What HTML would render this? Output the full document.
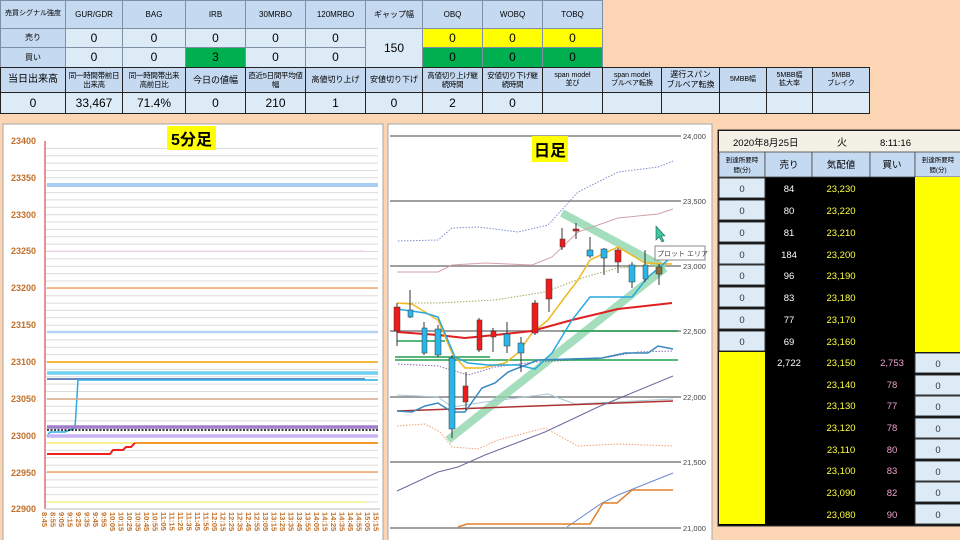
<!DOCTYPE html>
<html><head><meta charset="utf-8"><style>
*{margin:0;padding:0;box-sizing:border-box}
body{width:960px;height:540px;background:#fcd5b4;position:relative;overflow:hidden;font-family:"Liberation Sans","Noto Sans CJK JP",sans-serif}
.c{position:absolute;border:1px solid #7f8fa6;display:flex;align-items:center;justify-content:center;text-align:center;color:#000;line-height:1.2}
.h{background:#c5d9f1;font-size:8px}
.v{background:#ddebf7;font-size:12px}
.y{background:#ffff00;font-size:12px}
.g{background:#00b050;font-size:12px}
.k{border-color:#222}
.s{font-size:7.5px;letter-spacing:-0.3px}
</style></head><body>
<div class="c h" style="left:0;top:0;width:66px;height:29px;font-size:7px">売買シグナル強度</div>
<div class="c h" style="left:65px;top:0;width:58px;height:29px">GUR/GDR</div>
<div class="c h" style="left:122px;top:0;width:64px;height:29px">BAG</div>
<div class="c h" style="left:185px;top:0;width:61px;height:29px">IRB</div>
<div class="c h" style="left:245px;top:0;width:61px;height:29px">30MRBO</div>
<div class="c h" style="left:305px;top:0;width:61px;height:29px">120MRBO</div>
<div class="c h" style="left:365px;top:0;width:58px;height:29px">ギャップ幅</div>
<div class="c h" style="left:422px;top:0;width:61px;height:29px">OBQ</div>
<div class="c h" style="left:482px;top:0;width:61px;height:29px">WOBQ</div>
<div class="c h" style="left:542px;top:0;width:61px;height:29px">TOBQ</div>
<div class="c h" style="left:0;top:28px;width:66px;height:20px">売り</div>
<div class="c v" style="left:65px;top:28px;width:58px;height:20px">0</div>
<div class="c v" style="left:122px;top:28px;width:64px;height:20px">0</div>
<div class="c v" style="left:185px;top:28px;width:61px;height:20px">0</div>
<div class="c v" style="left:245px;top:28px;width:61px;height:20px">0</div>
<div class="c v" style="left:305px;top:28px;width:61px;height:20px">0</div>
<div class="c v" style="left:365px;top:28px;width:58px;height:40px">150</div>
<div class="c y" style="left:422px;top:28px;width:61px;height:20px">0</div>
<div class="c y" style="left:482px;top:28px;width:61px;height:20px">0</div>
<div class="c y" style="left:542px;top:28px;width:61px;height:20px">0</div>
<div class="c h" style="left:0;top:47px;width:66px;height:21px">買い</div>
<div class="c v" style="left:65px;top:47px;width:58px;height:21px">0</div>
<div class="c v" style="left:122px;top:47px;width:64px;height:21px">0</div>
<div class="c g" style="left:185px;top:47px;width:61px;height:21px">3</div>
<div class="c v" style="left:245px;top:47px;width:61px;height:21px">0</div>
<div class="c v" style="left:305px;top:47px;width:61px;height:21px">0</div>
<div class="c g" style="left:422px;top:47px;width:61px;height:21px">0</div>
<div class="c g" style="left:482px;top:47px;width:61px;height:21px">0</div>
<div class="c g" style="left:542px;top:47px;width:61px;height:21px">0</div>
<div class="c h k" style="left:0;top:67px;width:66px;height:26px;font-size:10px">当日出来高</div>
<div class="c h k s" style="left:65px;top:67px;width:58px;height:26px">同一時間帯前日<br>出来高</div>
<div class="c h k s" style="left:122px;top:67px;width:64px;height:26px">同一時間帯出来<br>高前日比</div>
<div class="c h k" style="left:185px;top:67px;width:61px;height:26px;font-size:9px">今日の値幅</div>
<div class="c h k s" style="left:245px;top:67px;width:61px;height:26px">直近5日間平均値<br>幅</div>
<div class="c h k" style="left:305px;top:67px;width:61px;height:26px">高値切り上げ</div>
<div class="c h k" style="left:365px;top:67px;width:58px;height:26px">安値切り下げ</div>
<div class="c h k s" style="left:422px;top:67px;width:61px;height:26px">高値切り上げ継<br>続時間</div>
<div class="c h k s" style="left:482px;top:67px;width:61px;height:26px">安値切り下げ継<br>続時間</div>
<div class="c h k" style="left:542px;top:67px;width:61px;height:26px;font-size:7px">span model<br>並び</div>
<div class="c h k" style="left:602px;top:67px;width:60px;height:26px;font-size:7px">span model<br>ブルベア転換</div>
<div class="c h k" style="left:661px;top:67px;width:59px;height:26px">遅行スパン<br>ブルベア転換</div>
<div class="c h k" style="left:719px;top:67px;width:48px;height:26px;font-size:7px">5MBB幅</div>
<div class="c h k" style="left:766px;top:67px;width:47px;height:26px;font-size:7px">5MBB幅<br>拡大率</div>
<div class="c h k" style="left:812px;top:67px;width:58px;height:26px;font-size:7px">5MBB<br>ブレイク</div>
<div class="c v k" style="left:0;top:92px;width:66px;height:22px">0</div>
<div class="c v k" style="left:65px;top:92px;width:58px;height:22px">33,467</div>
<div class="c v k" style="left:122px;top:92px;width:64px;height:22px">71.4%</div>
<div class="c v k" style="left:185px;top:92px;width:61px;height:22px">0</div>
<div class="c v k" style="left:245px;top:92px;width:61px;height:22px">210</div>
<div class="c v k" style="left:305px;top:92px;width:61px;height:22px">1</div>
<div class="c v k" style="left:365px;top:92px;width:58px;height:22px">0</div>
<div class="c v k" style="left:422px;top:92px;width:61px;height:22px">2</div>
<div class="c v k" style="left:482px;top:92px;width:61px;height:22px">0</div>
<div class="c v k" style="left:542px;top:92px;width:61px;height:22px"></div>
<div class="c v k" style="left:602px;top:92px;width:60px;height:22px"></div>
<div class="c v k" style="left:661px;top:92px;width:59px;height:22px"></div>
<div class="c v k" style="left:719px;top:92px;width:48px;height:22px"></div>
<div class="c v k" style="left:766px;top:92px;width:47px;height:22px"></div>
<div class="c v k" style="left:812px;top:92px;width:58px;height:22px"></div>

<svg style="position:absolute;left:0;top:0" width="960" height="540" xmlns="http://www.w3.org/2000/svg" font-family="Liberation Sans, Noto Sans CJK JP, sans-serif">
<rect x="3" y="124" width="380" height="418" fill="#fff" stroke="#a6a6a6"/>
<g stroke="#dcdcdc" stroke-width="1">
<path d="M45 148.4H378M45 155.7H378M45 163.1H378M45 170.5H378M45 177.8H378M45 185.2H378M45 192.6H378M45 199.9H378M45 207.3H378M45 214.7H378M45 222H378M45 229.4H378M45 236.8H378M45 244.1H378M45 251.5H378M45 258.9H378M45 266.2H378M45 273.6H378M45 281H378M45 288.3H378M45 295.7H378M45 303.1H378M45 310.4H378M45 317.8H378M45 325.2H378M45 332.5H378M45 339.9H378M45 347.3H378M45 354.6H378M45 362H378M45 369.4H378M45 376.7H378M45 384.1H378M45 391.5H378M45 398.8H378M45 406.2H378M45 413.6H378M45 420.9H378M45 428.3H378M45 435.7H378M45 443H378M45 450.4H378M45 457.8H378M45 465.1H378M45 472.5H378M45 479.9H378M45 487.2H378M45 494.6H378M45 502H378"/>
</g>
<line x1="45" y1="141" x2="45" y2="509" stroke="#e07070" stroke-width="1.5"/>
<line x1="45" y1="509" x2="380" y2="509" stroke="#bbb"/>
<g font-size="9" font-weight="bold" fill="#c0702a" text-anchor="end">
<text x="36" y="144">23400</text><text x="36" y="181">23350</text><text x="36" y="218">23300</text><text x="36" y="254">23250</text><text x="36" y="291">23200</text><text x="36" y="328">23150</text><text x="36" y="365">23100</text><text x="36" y="402">23050</text><text x="36" y="439">23000</text><text x="36" y="476">22950</text><text x="36" y="512">22900</text>
</g>
<line x1="47" y1="185" x2="378" y2="185" stroke="#a9cdf0" stroke-width="4"/>
<line x1="47" y1="251" x2="365" y2="251" stroke="#f6d4ee" stroke-width="1"/>
<line x1="47" y1="288" x2="378" y2="288" stroke="#f4a46a" stroke-width="1.5"/>
<line x1="47" y1="332" x2="378" y2="332" stroke="#b5d3f5" stroke-width="2.5"/>
<line x1="47" y1="362" x2="378" y2="362" stroke="#f4b83a" stroke-width="2"/>
<line x1="47" y1="373" x2="378" y2="373" stroke="#6fd0f0" stroke-width="3.5"/>
<line x1="47" y1="379" x2="365" y2="379" stroke="#6b8bbf" stroke-width="2"/>
<polyline points="47,436 50,432 65,432 75,428 78,380 378,380" fill="none" stroke="#29aee5" stroke-width="1.5"/>
<line x1="47" y1="399" x2="378" y2="399" stroke="#d9a98a" stroke-width="1.5"/>
<line x1="47" y1="427" x2="378" y2="427" stroke="#a07ec8" stroke-width="3.5"/>
<line x1="47" y1="430" x2="378" y2="430" stroke="#000" stroke-width="1.5" stroke-dasharray="2,1.5"/>
<line x1="47" y1="436" x2="378" y2="436" stroke="#c8b4f5" stroke-width="3.5"/>
<line x1="47" y1="443" x2="135" y2="443" stroke="#f7ea6a" stroke-width="1.5"/>
<line x1="135" y1="443" x2="378" y2="443" stroke="#f39a28" stroke-width="2"/>
<polyline points="47,454 110,454 113,450 123,450 126,447 131,447 135,443" fill="none" stroke="#ee2020" stroke-width="2"/>
<line x1="47" y1="472" x2="378" y2="472" stroke="#f4a46a" stroke-width="1.5"/>
<line x1="47" y1="502" x2="365" y2="502" stroke="#f7f080" stroke-width="1.5"/>
<rect x="167" y="126" width="49" height="24" fill="#ffff00"/>
<text x="191.5" y="145" font-size="16" font-weight="bold" text-anchor="middle">5分足</text>
<g font-size="7.5" font-weight="bold" fill="#c0702a">
<text transform="translate(42,512) rotate(90)">8:45</text><text transform="translate(50.5,512) rotate(90)">8:55</text><text transform="translate(59,512) rotate(90)">9:05</text><text transform="translate(67.5,512) rotate(90)">9:15</text><text transform="translate(76,512) rotate(90)">9:25</text><text transform="translate(84.5,512) rotate(90)">9:35</text><text transform="translate(93,512) rotate(90)">9:45</text><text transform="translate(101.5,512) rotate(90)">9:55</text><text transform="translate(110,512) rotate(90)">10:05</text><text transform="translate(118.5,512) rotate(90)">10:15</text><text transform="translate(127,512) rotate(90)">10:25</text><text transform="translate(135.5,512) rotate(90)">10:35</text><text transform="translate(144,512) rotate(90)">10:45</text><text transform="translate(152.5,512) rotate(90)">10:55</text><text transform="translate(161,512) rotate(90)">11:05</text><text transform="translate(169.5,512) rotate(90)">11:15</text><text transform="translate(178,512) rotate(90)">11:25</text><text transform="translate(186.5,512) rotate(90)">11:35</text><text transform="translate(195,512) rotate(90)">11:45</text><text transform="translate(203.5,512) rotate(90)">11:55</text><text transform="translate(212,512) rotate(90)">12:05</text><text transform="translate(220.5,512) rotate(90)">12:15</text><text transform="translate(229,512) rotate(90)">12:25</text><text transform="translate(237.5,512) rotate(90)">12:35</text><text transform="translate(246,512) rotate(90)">12:45</text><text transform="translate(254.5,512) rotate(90)">12:55</text><text transform="translate(263,512) rotate(90)">13:05</text><text transform="translate(271.5,512) rotate(90)">13:15</text><text transform="translate(280,512) rotate(90)">13:25</text><text transform="translate(288.5,512) rotate(90)">13:35</text><text transform="translate(297,512) rotate(90)">13:45</text><text transform="translate(305.5,512) rotate(90)">13:55</text><text transform="translate(314,512) rotate(90)">14:05</text><text transform="translate(322.5,512) rotate(90)">14:15</text><text transform="translate(331,512) rotate(90)">14:25</text><text transform="translate(339.5,512) rotate(90)">14:35</text><text transform="translate(348,512) rotate(90)">14:45</text><text transform="translate(356.5,512) rotate(90)">14:55</text><text transform="translate(365,512) rotate(90)">15:05</text><text transform="translate(373.5,512) rotate(90)">15:15</text>
</g>

<rect x="388" y="124" width="324" height="418" fill="#fff" stroke="#a6a6a6"/>
<g stroke="#808080" stroke-width="1.5">
<path d="M390 136H681M390 201H681M390 266H681M390 331H681M390 397H681M390 462H681M390 528H681"/>
</g>
<g font-size="7.5" fill="#444">
<text x="683" y="139">24,000</text><text x="683" y="204">23,500</text><text x="683" y="269">23,000</text><text x="683" y="334">22,500</text><text x="683" y="400">22,000</text><text x="683" y="465">21,500</text><text x="683" y="531">21,000</text>
</g>
<path d="M448,440 L665,268" stroke="#8fd6ad" stroke-width="8" opacity="0.8"/>
<path d="M562,213 L665,268" stroke="#8fd6ad" stroke-width="8" opacity="0.8"/>
<g fill="none" stroke-width="1">
<polyline stroke="#7f8fd0" stroke-dasharray="1.5,1.5" points="398,241 438,240 452,228 478,227 518,232 548,225 578,192 618,172 658,167 673,161"/>
<polyline stroke="#d4a0a8" points="397,272 438,272 452,265 485,263 532,265 552,257 578,232 618,218 658,214 673,209"/>
<polyline stroke="#a8a860" stroke-dasharray="1.5,1.5" points="397,303 438,303 495,300 545,292 585,277 618,268 672,264"/>
<polyline stroke="#8a6aa8" stroke-dasharray="1.5,1.5" points="398,364 438,366 468,375 495,367 535,362 598,359 638,352 673,351"/>
<polyline stroke="#a8c8d8" points="397,395 438,397 452,407 485,402 548,394 575,404 673,399"/>
<polyline stroke="#b03030" stroke-width="1.5" points="397,411 673,401"/>
<polyline stroke="#f0a070" stroke-dasharray="1.5,1.5" points="397,426 425,424 440,432 452,447 478,449 498,440 545,428 578,446 618,444 673,446"/>
<polyline stroke="#6a6aa0" points="397,491 438,472 458,467 485,455 545,432 598,407 673,376"/>
<polyline stroke="#6a8ad0" points="567,527 602,503 618,495 673,473"/>
<polyline stroke="#e0802a" stroke-width="1.5" points="458,527 467,524 590,524 603,503 617,503 632,490 673,490"/>
<line x1="397" y1="341" x2="445" y2="341" stroke="#20a050" stroke-width="1.5"/>
<line x1="562" y1="331" x2="678" y2="331" stroke="#20a050" stroke-width="1.5"/>
<line x1="395" y1="360" x2="678" y2="360" stroke="#20a050" stroke-width="1.5"/>
<line x1="395" y1="357" x2="490" y2="357" stroke="#20a050" stroke-width="1.5"/>
<polyline stroke="#e02020" stroke-width="2" points="397,332 438,335 465,338 495,335 532,331 572,320 618,309 672,303"/>
<polyline stroke="#f0b820" stroke-width="1.5" points="397,303 412,304 438,320 452,353 465,368 482,368 505,363 518,353 532,333 548,320 565,297 578,280 590,260 618,247 645,263 672,264"/>
<polyline stroke="#2aa8e0" stroke-width="1.5" points="397,309 425,313 438,317 455,357 468,363 488,365 518,365 535,369 552,353 572,320 590,297 632,297 648,277 668,260"/>
<polyline stroke="#3a88c0" stroke-width="1.5" points="397,411 412,412 425,406 438,403 452,412 465,412 482,388 495,383 508,372 538,360 602,358 625,353 648,353 658,346 673,349"/>
</g>
<g stroke="#333" stroke-width="1">
<path d="M397 303V346M410 290V318M424 322V355M438 325V357M452 355V438M466 372V410M479 318V352M493 328V352M507 322V353M521 337V372M535 300V335M549 279V312M562 228V250M576 223V239M590 237V258M604 248V275M618 248V273M632 262V288M645 250V282M659 264V285"/>
</g>
<g stroke="#333" stroke-width="0.5">
<rect x="394" y="307" width="6" height="24" fill="#ee1c1c"/>
<rect x="408" y="310" width="5" height="7" fill="#29b6ea"/>
<rect x="422" y="328" width="5" height="25" fill="#29b6ea"/>
<rect x="435" y="329" width="6" height="26" fill="#29b6ea"/>
<rect x="449" y="358" width="6" height="71" fill="#29b6ea"/>
<rect x="463" y="386" width="5" height="16" fill="#ee1c1c"/>
<rect x="477" y="320" width="5" height="30" fill="#ee1c1c"/>
<rect x="491" y="331" width="5" height="6" fill="#ee1c1c"/>
<rect x="504" y="334" width="6" height="12" fill="#29b6ea"/>
<rect x="518" y="343" width="6" height="10" fill="#29b6ea"/>
<rect x="532" y="303" width="6" height="30" fill="#ee1c1c"/>
<rect x="546" y="279" width="6" height="20" fill="#ee1c1c"/>
<rect x="560" y="239" width="5" height="8" fill="#ee1c1c"/>
<rect x="573" y="229" width="6" height="2" fill="#ee1c1c"/>
<rect x="587" y="250" width="6" height="6" fill="#29b6ea"/>
<rect x="601" y="249" width="6" height="9" fill="#29b6ea"/>
<rect x="615" y="250" width="6" height="12" fill="#ee1c1c"/>
<rect x="629" y="265" width="6" height="17" fill="#29b6ea"/>
<rect x="643" y="265" width="5" height="14" fill="#29b6ea"/>
<rect x="656" y="267" width="6" height="7" fill="#8a7040"/>
</g>
<rect x="532" y="136" width="36" height="26" fill="#ffff00"/>
<text x="550" y="156" font-size="16" font-weight="bold" text-anchor="middle">日足</text>
<path d="M656 226 L656 240 L659 237 L662 242 L664 241 L661 236 L665 236 Z" fill="#3cc8a0" stroke="#206050" stroke-width="0.6"/>
<rect x="655" y="246" width="50" height="14" fill="#fff" stroke="#888"/>
<text x="657" y="256" font-size="7" fill="#444">プロット エリア</text>

<rect x="718" y="130" width="244" height="396" fill="#000" stroke="#333"/>
<rect x="719" y="131" width="242" height="21" fill="#f3f0e6"/>
<text x="733" y="146" font-size="9.5">2020年8月25日</text>
<text x="837" y="146" font-size="10">火</text>
<text x="880" y="146" font-size="9.5">8:11:16</text>
<g fill="#c5d9f1" stroke="#444" stroke-width="0.8">
<rect x="719" y="152" width="46" height="25"/><rect x="765" y="152" width="47" height="25"/><rect x="812" y="152" width="58" height="25"/><rect x="870" y="152" width="45" height="25"/><rect x="915" y="152" width="46" height="25"/>
</g>
<g font-size="6.5" text-anchor="middle"><text x="742" y="162">到達所要時</text><text x="742" y="172">間(分)</text><text x="938" y="162">到達所要時</text><text x="938" y="172">間(分)</text></g>
<g font-size="9.5" text-anchor="middle"><text x="789" y="168">売り</text><text x="841" y="168">気配値</text><text x="892" y="168">買い</text></g>
<rect x="915" y="177" width="46" height="175" fill="#ffff00"/>
<rect x="719" y="352" width="46" height="172" fill="#ffff00"/>
<g fill="#ddebf7" stroke="#333" stroke-width="1">
<rect x="719" y="178" width="46" height="20"/><rect x="719" y="200" width="46" height="20"/><rect x="719" y="222" width="46" height="20"/><rect x="719" y="244" width="46" height="20"/><rect x="719" y="265" width="46" height="20"/><rect x="719" y="287" width="46" height="20"/><rect x="719" y="309" width="46" height="20"/><rect x="719" y="331" width="46" height="20"/>
<rect x="915" y="353" width="46" height="20"/><rect x="915" y="375" width="46" height="20"/><rect x="915" y="396" width="46" height="20"/><rect x="915" y="418" width="46" height="20"/><rect x="915" y="439" width="46" height="20"/><rect x="915" y="461" width="46" height="20"/><rect x="915" y="482" width="46" height="20"/><rect x="915" y="504" width="46" height="20"/>
</g>
<g font-size="9.5" text-anchor="middle">
<g fill="#333"><text x="742" y="192">0</text><text x="742" y="214">0</text><text x="742" y="236">0</text><text x="742" y="258">0</text><text x="742" y="279">0</text><text x="742" y="301">0</text><text x="742" y="323">0</text><text x="742" y="345">0</text>
<text x="938" y="367">0</text><text x="938" y="389">0</text><text x="938" y="410">0</text><text x="938" y="432">0</text><text x="938" y="453">0</text><text x="938" y="475">0</text><text x="938" y="496">0</text><text x="938" y="518">0</text></g>
<g fill="#fff"><text x="789" y="192">84</text><text x="789" y="214">80</text><text x="789" y="236">81</text><text x="789" y="258">184</text><text x="789" y="279">96</text><text x="789" y="301">83</text><text x="789" y="323">77</text><text x="789" y="345">69</text><text x="789" y="366">2,722</text></g>
<g fill="#ffff40"><text x="841" y="192">23,230</text><text x="841" y="214">23,220</text><text x="841" y="236">23,210</text><text x="841" y="258">23,200</text><text x="841" y="279">23,190</text><text x="841" y="301">23,180</text><text x="841" y="323">23,170</text><text x="841" y="345">23,160</text><text x="841" y="366">23,150</text><text x="841" y="388">23,140</text><text x="841" y="409">23,130</text><text x="841" y="431">23,120</text><text x="841" y="453">23,110</text><text x="841" y="474">23,100</text><text x="841" y="496">23,090</text><text x="841" y="518">23,080</text></g>
<g fill="#f0a0d0"><text x="892" y="366">2,753</text><text x="892" y="388">78</text><text x="892" y="409">77</text><text x="892" y="431">78</text><text x="892" y="453">80</text><text x="892" y="474">83</text><text x="892" y="496">82</text><text x="892" y="518">90</text></g>
</g>
</svg>
</body></html>
